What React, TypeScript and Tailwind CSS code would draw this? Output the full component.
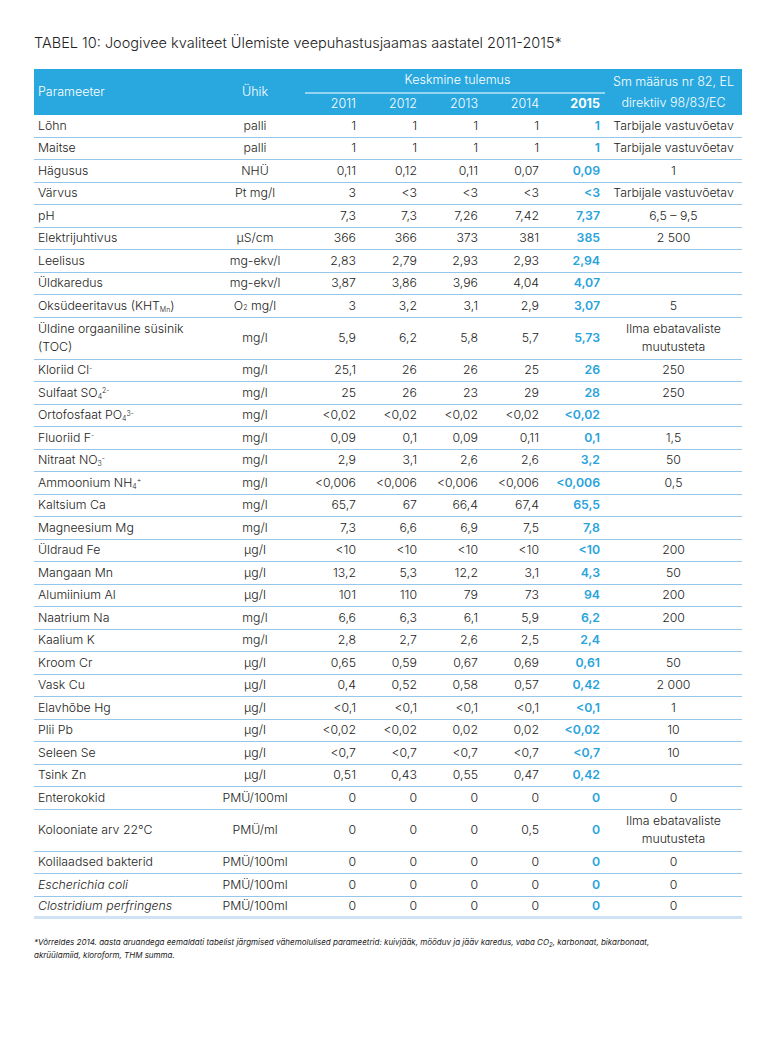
import React from "react";

type Row = {
  name: React.ReactNode;
  unit: React.ReactNode;
  v: string[];
  last: string;
  norm: React.ReactNode;
  tall?: boolean;
};

const Sub = ({ children }: { children: React.ReactNode }) => (
  <sub className="text-[7px]">{children}</sub>
);
const Sup = ({ children }: { children: React.ReactNode }) => (
  <sup className="text-[7px]">{children}</sup>
);

const ILMA = (
  <>
    Ilma ebatavaliste
    <br />
    muutusteta
  </>
);

const rows: Row[] = [
  { name: "Lõhn", unit: "palli", v: ["1", "1", "1", "1"], last: "1", norm: "Tarbijale vastuvõetav" },
  { name: "Maitse", unit: "palli", v: ["1", "1", "1", "1"], last: "1", norm: "Tarbijale vastuvõetav" },
  { name: "Hägusus", unit: "NHÜ", v: ["0,11", "0,12", "0,11", "0,07"], last: "0,09", norm: "1" },
  { name: "Värvus", unit: "Pt mg/l", v: ["3", "<3", "<3", "<3"], last: "<3", norm: "Tarbijale vastuvõetav" },
  { name: "pH", unit: "", v: ["7,3", "7,3", "7,26", "7,42"], last: "7,37", norm: "6,5 – 9,5" },
  { name: "Elektrijuhtivus", unit: "µS/cm", v: ["366", "366", "373", "381"], last: "385", norm: "2 500" },
  { name: "Leelisus", unit: "mg-ekv/l", v: ["2,83", "2,79", "2,93", "2,93"], last: "2,94", norm: "" },
  { name: "Üldkaredus", unit: "mg-ekv/l", v: ["3,87", "3,86", "3,96", "4,04"], last: "4,07", norm: "" },
  {
    name: (
      <>
        Oksüdeeritavus (KHT<Sub>Mn</Sub>)
      </>
    ),
    unit: (
      <>
        O<Sub>2</Sub>&nbsp;mg/l
      </>
    ),
    v: ["3", "3,2", "3,1", "2,9"],
    last: "3,07",
    norm: "5",
  },
  {
    name: (
      <>
        Üldine orgaaniline süsinik
        <br />
        (TOC)
      </>
    ),
    unit: "mg/l",
    v: ["5,9", "6,2", "5,8", "5,7"],
    last: "5,73",
    norm: ILMA,
    tall: true,
  },
  {
    name: (
      <>
        Kloriid Cl<Sup>-</Sup>
      </>
    ),
    unit: "mg/l",
    v: ["25,1", "26", "26", "25"],
    last: "26",
    norm: "250",
  },
  {
    name: (
      <>
        Sulfaat SO<Sub>4</Sub>
        <Sup>2-</Sup>
      </>
    ),
    unit: "mg/l",
    v: ["25", "26", "23", "29"],
    last: "28",
    norm: "250",
  },
  {
    name: (
      <>
        Ortofosfaat PO<Sub>4</Sub>
        <Sup>3-</Sup>
      </>
    ),
    unit: "mg/l",
    v: ["<0,02", "<0,02", "<0,02", "<0,02"],
    last: "<0,02",
    norm: "",
  },
  {
    name: (
      <>
        Fluoriid F<Sup>-</Sup>
      </>
    ),
    unit: "mg/l",
    v: ["0,09", "0,1", "0,09", "0,11"],
    last: "0,1",
    norm: "1,5",
  },
  {
    name: (
      <>
        Nitraat NO<Sub>3</Sub>
        <Sup>-</Sup>
      </>
    ),
    unit: "mg/l",
    v: ["2,9", "3,1", "2,6", "2,6"],
    last: "3,2",
    norm: "50",
  },
  {
    name: (
      <>
        Ammoonium NH<Sub>4</Sub>
        <Sup>+</Sup>
      </>
    ),
    unit: "mg/l",
    v: ["<0,006", "<0,006", "<0,006", "<0,006"],
    last: "<0,006",
    norm: "0,5",
  },
  { name: "Kaltsium Ca", unit: "mg/l", v: ["65,7", "67", "66,4", "67,4"], last: "65,5", norm: "" },
  { name: "Magneesium Mg", unit: "mg/l", v: ["7,3", "6,6", "6,9", "7,5"], last: "7,8", norm: "" },
  { name: "Üldraud Fe", unit: "µg/l", v: ["<10", "<10", "<10", "<10"], last: "<10", norm: "200" },
  { name: "Mangaan Mn", unit: "µg/l", v: ["13,2", "5,3", "12,2", "3,1"], last: "4,3", norm: "50" },
  { name: "Alumiinium Al", unit: "µg/l", v: ["101", "110", "79", "73"], last: "94", norm: "200" },
  { name: "Naatrium Na", unit: "mg/l", v: ["6,6", "6,3", "6,1", "5,9"], last: "6,2", norm: "200" },
  { name: "Kaalium K", unit: "mg/l", v: ["2,8", "2,7", "2,6", "2,5"], last: "2,4", norm: "" },
  { name: "Kroom Cr", unit: "µg/l", v: ["0,65", "0,59", "0,67", "0,69"], last: "0,61", norm: "50" },
  { name: "Vask Cu", unit: "µg/l", v: ["0,4", "0,52", "0,58", "0,57"], last: "0,42", norm: "2 000" },
  { name: "Elavhõbe Hg", unit: "µg/l", v: ["<0,1", "<0,1", "<0,1", "<0,1"], last: "<0,1", norm: "1" },
  { name: "Plii Pb", unit: "µg/l", v: ["<0,02", "<0,02", "0,02", "0,02"], last: "<0,02", norm: "10" },
  { name: "Seleen Se", unit: "µg/l", v: ["<0,7", "<0,7", "<0,7", "<0,7"], last: "<0,7", norm: "10" },
  { name: "Tsink Zn", unit: "µg/l", v: ["0,51", "0,43", "0,55", "0,47"], last: "0,42", norm: "" },
  { name: "Enterokokid", unit: "PMÜ/100ml", v: ["0", "0", "0", "0"], last: "0", norm: "0" },
  { name: "Kolooniate arv 22°C", unit: "PMÜ/ml", v: ["0", "0", "0", "0,5"], last: "0", norm: ILMA, tall: true },
  { name: "Kolilaadsed bakterid", unit: "PMÜ/100ml", v: ["0", "0", "0", "0"], last: "0", norm: "0" },
  { name: <i>Escherichia coli</i>, unit: "PMÜ/100ml", v: ["0", "0", "0", "0"], last: "0", norm: "0" },
  { name: <i>Clostridium perfringens</i>, unit: "PMÜ/100ml", v: ["0", "0", "0", "0"], last: "0", norm: "0" },
];

const cols = "grid grid-cols-[176px_90px_61px_61px_61px_61px_61px_137px]";

export default function App() {
  return (
    <div className="min-h-screen w-[777px] bg-white px-[34px] pt-[34px] font-['Inter','Liberation_Sans',Arial,sans-serif] font-light text-[#1d1d1b]">
      <h1 className="mb-[17px] text-[14.5px] font-light leading-[18px] text-[#222]">
        TABEL 10: Joogivee kvaliteet Ülemiste veepuhastusjaamas aastatel 2011-2015*
      </h1>

      <div className="w-[708px]">
        {/* header */}
        <div className={`${cols} h-[46px] grid-rows-[23px_23px] bg-[#29a8e0] text-[12.5px] text-white`}>
          <div className="row-span-2 flex items-center pl-[4px]">Parameeter</div>
          <div className="row-span-2 flex items-center justify-center">Ühik</div>
          <div className="col-span-5 flex items-center justify-center pl-[10px]">Keskmine tulemus</div>
          <div className="row-span-2 flex items-center justify-center text-center leading-[21px]">
            Sm määrus nr 82, EL
            <br />
            direktiiv 98/83/EC
          </div>
          {["2011", "2012", "2013", "2014"].map((y, i) => (
            <div
              key={y}
              className={`flex items-center justify-end border-t-2 border-white/50 pr-[5px] ${i === 0 ? "ml-[5px]" : ""}`}
            >
              {y}
            </div>
          ))}
          <div className="flex items-center justify-end border-t-2 border-white/50 pr-[5px] font-bold">2015</div>
        </div>

        {/* body */}
        <div className="text-[12.3px]">
          {rows.map((r, i) => {
            const lastRow = i === rows.length - 1;
            return (
              <div
                key={i}
                className={`${cols} ${r.tall ? "h-[42px]" : "h-[22.5px]"} ${
                  lastRow ? "border-b-[3px] border-[#cfe3f4]" : "border-b border-[#96c7ea]"
                } leading-[18px]`}
              >
                <div className="flex items-center pl-[4px]">
                  <span>{r.name}</span>
                </div>
                <div className="flex items-center justify-center">{r.unit}</div>
                {r.v.map((x, j) => (
                  <div key={j} className="flex items-center justify-end pr-[5px]">
                    {x}
                  </div>
                ))}
                <div className="flex items-center justify-end pr-[5px] font-semibold text-[#29a3dc]">{r.last}</div>
                <div className="flex items-center justify-center text-center">{r.norm}</div>
              </div>
            );
          })}
        </div>

        <p className="mt-[17px] text-[8px] font-normal italic leading-[13px] text-[#222]">
          *Võrreldes 2014. aasta aruandega eemaldati tabelist järgmised vähemolulised parameetrid: kuivjääk, mööduv ja jääv
          karedus, vaba CO<sub className="text-[6px]">2</sub>, karbonaat, bikarbonaat,
          <br />
          akrüülamiid, kloroform, THM summa.
        </p>
      </div>
    </div>
  );
}
